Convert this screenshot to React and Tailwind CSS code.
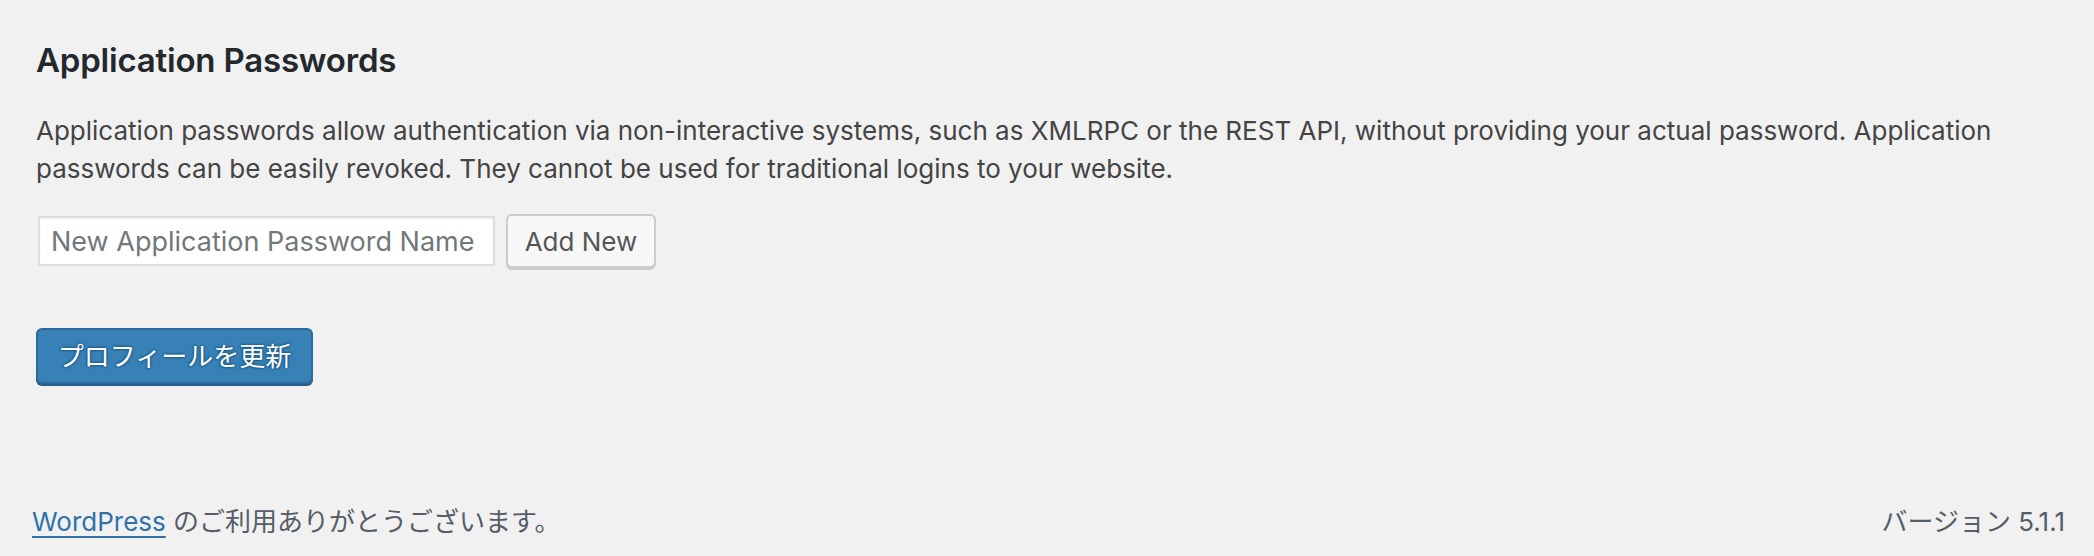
const font = "font-['Inter','Noto_Sans_CJK_JP',sans-serif]";

export default function App() {
    return (
        <div className={`flex h-[556px] w-full flex-col bg-[#f1f1f1] ${font}`}>
            <div className="pl-[36px] pr-[40px]">
                <h2 className="mt-[40px] text-[33px] font-semibold leading-[40px] tracking-[-0.2px] text-[#23282d]">Application Passwords</h2>
                <p className="mt-[32px] text-[26px] leading-[38px] text-[#444]">
                    Application passwords allow authentication via non-interactive systems, such as XMLRPC or the REST API, without providing your actual password. Application passwords can be easily revoked. They cannot be used for traditional logins to your website.
                </p>

                <div className="mt-[26px] flex items-center gap-[11px]">
                    <input
                        type="text"
                        placeholder="New Application Password Name"
                        className="ml-[2px] h-[50px] w-[457px] border-2 border-[#ddd] bg-white px-[11px] text-[27px] text-[#32373c] shadow-[inset_0_1px_2px_rgba(0,0,0,0.07)] placeholder-[#72777c] outline-none"
                    />
                    <button type="button" className="h-[54px] w-[150px] rounded-[6px] border-2 border-[#ccc] bg-[#f7f7f7] text-[26px] text-[#555] shadow-[0_2px_0_#ccc]">
                        Add New
                    </button>
                </div>

                <button
                    type="button"
                    className="mt-[60px] h-[56px] w-[277px] rounded-[6px] border-2 border-[#2b6a9c] bg-[#3781b6] text-[26px] text-white shadow-[0_2px_0_#23608f] [text-shadow:0_-1px_2px_#23608f,1px_0_2px_#23608f,0_1px_2px_#23608f,-1px_0_2px_#23608f]"
                >
                    プロフィールを更新
                </button>
            </div>

            <footer className="mt-auto flex items-center justify-between pb-[16px] pl-[32px] pr-[29px] text-[26px] leading-[36px] text-[#555d66]">
                <p>
                    <a href="#" className="text-[#2f71a8] underline decoration-2 underline-offset-[5px]">WordPress</a> のご利用ありがとうございます。
                </p>
                <p>バージョン 5.1.1</p>
            </footer>
        </div>
    );
}
